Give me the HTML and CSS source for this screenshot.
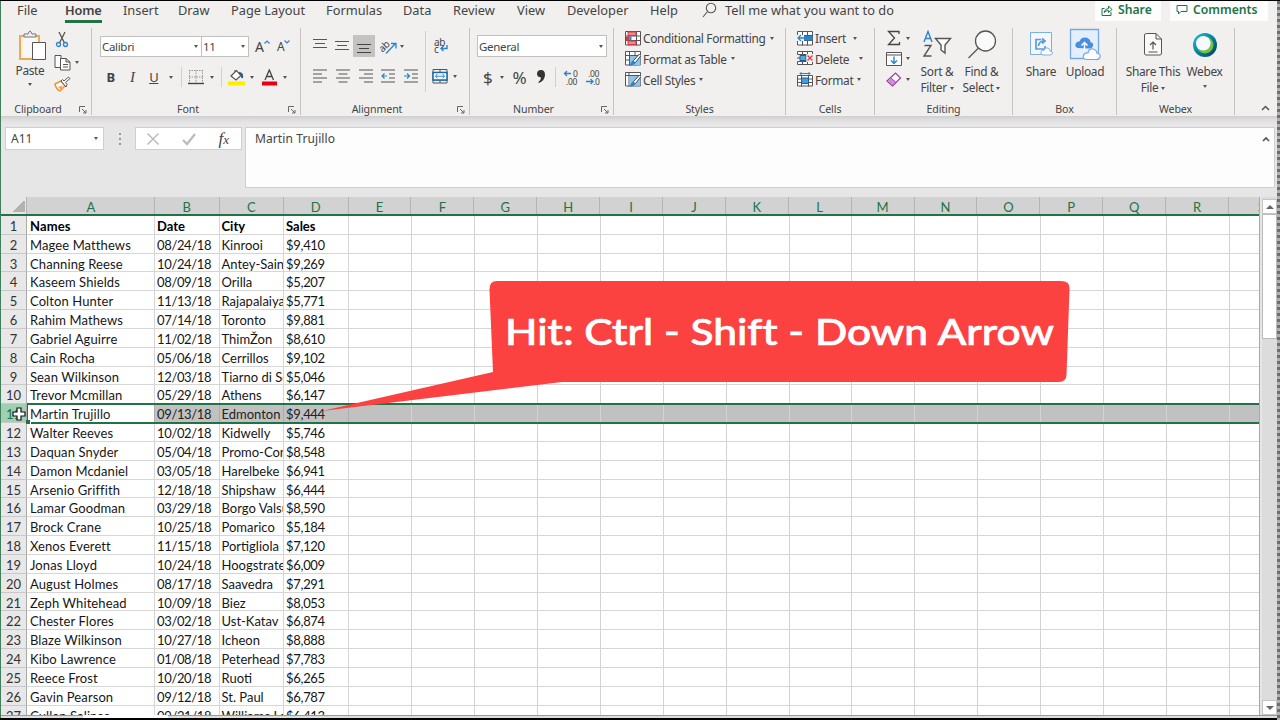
FILE: index.html
```html
<!DOCTYPE html>
<html lang="en">
<head>
<meta charset="utf-8">
<title>Workbook</title>
<link rel="stylesheet" href="styles.css">
</head>
<body>
<div class="app">
<div class="main">
<nav class="tabs">
<span class="t-file">File</span><span class="t-home">Home</span><span class="t-insert">Insert</span><span class="t-draw">Draw</span><span class="t-page">Page Layout</span><span class="t-form">Formulas</span><span class="t-data">Data</span><span class="t-rev">Review</span><span class="t-view">View</span><span class="t-dev">Developer</span><span class="t-help">Help</span>
<svg class="t-search" width="16" height="17" viewBox="0 0 16 17" fill="none" stroke="#555" stroke-width="1.1"><circle cx="9" cy="6" r="4.7"/><path d="M5.5 9.5L1 15"/></svg>
<span class="t-tell">Tell me what you want to do</span>
<span class="btn b-share"><svg width="12" height="13" viewBox="0 0 12 13" fill="none" stroke="#217346"><path d="M3.5 4.5H1v7h9V8M3 8.500Q4 4.500 7.500 4.500V2L11 5.500L7.500 8.500V6.500Q5 6.500 3 8.500Z"/></svg>Share</span>
<span class="btn b-com"><svg width="12" height="12" viewBox="0 0 12 12" fill="none" stroke="#217346"><path d="M1 1.500h10v6H5L2.500 10V7.500H1Z"/></svg>Comments</span>
</nav>
<section class="ribbon">
<div class="group g-clip">
 <div class="body">
  <div class="big paste"><svg width="30" height="32" viewBox="0 0 30 32"><path d="M3 6H22V29H3Z" fill="#fff3df" stroke="#efaa56" stroke-width="2"/><path d="M6 8h13v19H6Z" fill="#f8f8f8"/><path d="M7 7V4h4Q12 1 13 1T15 4h4v3Z" fill="#eee" stroke="#777"/><path d="M15.500 12.500h13v17h-13Z" fill="#fff" stroke="#555"/></svg><span>Paste</span><i class="caret"></i></div>
  <div class="clip-col">
   <div><svg width="16" height="18" viewBox="0 0 16 18" fill="none" stroke="#555" stroke-width="1.300"><path d="M5 1L10.500 12M11 1L5.500 12"/><g stroke="#2b83cc"><circle cx="4.500" cy="13.500" r="2"/><circle cx="11.500" cy="13.500" r="2"/></g></svg></div>
   <div><svg width="17" height="17" viewBox="0 0 17 17" fill="#fff" stroke="#555"><path d="M1 1.500h6v12H1Z"/><path d="M6.500 4.500H12L16 8v8H6.500ZM12 4.500V8h4M9 10.500h5M9 13h5"/></svg><i class="caret"></i></div>
   <div><svg width="17" height="16" viewBox="0 0 17 16"><path d="M1 8L7 5L11 10L6 15Q2 13 1 8Z" fill="#fff" stroke="#e99238" stroke-width="1.400"/><path d="M4 11L9 9.500L7 14Z" fill="#f0a14e"/><path d="M7 5l5 6 1-2.500-1.500-2L16 2.500 14.500 1 10 5 8.500 3.500Z" fill="#fff" stroke="#555"/></svg></div>
  </div>
 </div>
 <div class="cap">Clipboard</div><svg class="launch" width="8" height="8" viewBox="0 0 8 8" fill="none" stroke="#666"><path d="M.5 6V.5H6M3 3l4 4M7 4v3H4"/></svg>
</div>
<div class="group g-font">
 <div class="body col">
  <div class="line font1"><span class="combo c-name">Calibri<i class="caret"></i></span><span class="combo c-size">11<i class="caret"></i></span><span class="grow">A<svg width="6" height="4" viewBox="0 0 6 4" fill="none" stroke="#2b83cc" stroke-width="1.200"><path d="M.5 3.500L3 1L5.500 3.500"/></svg></span><span class="grow small">A<svg width="6" height="4" viewBox="0 0 6 4" fill="none" stroke="#2b83cc" stroke-width="1.200"><path d="M.5 .5L3 3L5.500 .5"/></svg></span></div>
  <div class="line font2"><b>B</b><em>I</em><u>U</u><i class="caret"></i><i class="vr"></i>
   <svg width="16" height="16" viewBox="0 0 16 16" fill="none" stroke="#999"><path d="M1.500 1v13M8 1v13M14.500 1v13M1 1.500h14M1 8h14" stroke-dasharray="1.500 1"/><path d="M0 14.500h16" stroke="#444" stroke-width="1.400"/></svg><i class="caret"></i><i class="vr"></i>
   <svg width="17" height="17" viewBox="0 0 17 17"><path d="M0 12.500h17v4H0Z" fill="#ffed00"/><path d="M3 7L8.500 1.500L13 6.500L8 11ZM7 3V1" fill="#fff" stroke="#555" stroke-width="1.200"/><path d="M11 4Q15 4 14 9" fill="none" stroke="#205891" stroke-width="2"/></svg><i class="caret"></i>
   <svg width="17" height="17" viewBox="0 0 17 17"><path d="M1 12.500h15v4H1Z" fill="#e80010"/><path d="M4 11L8.300 1L12.500 11M5.500 7.500H11" fill="none" stroke="#444" stroke-width="1.300"/></svg><i class="caret"></i></div>
 </div>
 <div class="cap">Font</div><svg class="launch" width="8" height="8" viewBox="0 0 8 8" fill="none" stroke="#666"><path d="M.5 6V.5H6M3 3l4 4M7 4v3H4"/></svg>
</div>
<div class="group g-align">
 <div class="body">
 <div class="al-left">
  <div class="line al1"><span><svg width="14" height="16" viewBox="0 0 14 16" stroke="#555" stroke-width="1.200"><path d="M0 1.500h14M2 5.500h10M0 9.500h14"/></svg></span><span><svg width="14" height="16" viewBox="0 0 14 16" stroke="#555" stroke-width="1.200"><path d="M0 3.500h14M2 7.500h10M0 11.500h14"/></svg></span><span class="on"><svg width="14" height="16" viewBox="0 0 14 16" stroke="#444" stroke-width="1.200"><path d="M0 6.500h14M2 10.500h10M0 14.500h14"/></svg></span><span class="orient"><svg width="18" height="17" viewBox="0 0 18 17"><text x="-1" y="12" class="ab" transform="rotate(-45 4 9)">ab</text><path d="M6 15.500L15 6M11 5.500h5v5" fill="none" stroke="#2b83cc" stroke-width="1.300"/></svg><i class="caret"></i></span></div>
  <div class="line al2"><span><svg width="14" height="14" viewBox="0 0 14 14" stroke="#555" stroke-width="1.200"><path d="M0 1h14M0 5h9M0 9h14M0 13h9"/></svg></span><span><svg width="14" height="14" viewBox="0 0 14 14" stroke="#555" stroke-width="1.200"><path d="M0 1h14M2.500 5h9M0 9h14M2.500 13h9"/></svg></span><span><svg width="14" height="14" viewBox="0 0 14 14" stroke="#555" stroke-width="1.200"><path d="M0 1h14M5 5h9M0 9h14M5 13h9"/></svg></span><span><svg width="14" height="14" viewBox="0 0 14 14" stroke="#555" stroke-width="1.200" fill="none"><path d="M0 1h14M8 5h6M8 9h6M0 13h14"/><path d="M6 7H1M3.500 4.500L1 7l2.500 2.500" stroke="#2b83cc"/></svg></span><span><svg width="14" height="14" viewBox="0 0 14 14" stroke="#555" stroke-width="1.200" fill="none"><path d="M0 1h14M8 5h6M8 9h6M0 13h14"/><path d="M0 7h5M3 4.500L5.500 7L3 9.500" stroke="#2b83cc"/></svg></span></div>
 </div>
 <div class="al-right"><svg width="16" height="18" viewBox="0 0 16 18"><text x="1" y="9" class="wr">ab</text><text x="1" y="16" class="wr">c</text><path d="M14 8v3.500H8M10.500 9L8 11.500L10.500 14" fill="none" stroke="#2b83cc" stroke-width="1.400"/></svg>
 <div class="mrg"><svg width="16" height="15" viewBox="0 0 16 15" fill="none" stroke="#555"><path d="M1 .5h14v13.500H1ZM1 3.500h14M1 11h14M8 .5v3M8 11v3"/><path d="M1 3.500h14v7.500H1Z" fill="#fff" stroke="#1669ad" stroke-width="1.500"/><path d="M3.500 7.200h9M5.500 5L3.500 7.200L5.500 9.400M10.500 5l2 2.200L10.500 9.400" stroke="#2b83cc"/></svg><i class="caret"></i></div></div>
 </div>
 <div class="cap">Alignment</div><svg class="launch" width="8" height="8" viewBox="0 0 8 8" fill="none" stroke="#666"><path d="M.5 6V.5H6M3 3l4 4M7 4v3H4"/></svg>
</div>
<div class="group g-num">
 <div class="body col">
  <div class="line"><span class="combo c-gen">General<i class="caret"></i></span></div>
  <div class="line num2"><span>$</span><i class="caret"></i><span>%</span><svg width="10" height="14" viewBox="0 0 10 14"><path d="M5 0Q9 0 9 5Q9 10 3 13Q2 13 2.500 12Q5 10 5 7.500Q1 7 1 4Q1 0 5 0Z" fill="#333"/></svg><i class="vr"></i>
  <svg width="17" height="17" viewBox="0 0 17 17"><text x="10" y="8" class="dec">0</text><text x="3" y="16" class="dec">.00</text><path d="M8 4.500H1.500M4 2L1.500 4.500L4 7" fill="none" stroke="#2b83cc" stroke-width="1.300"/></svg>
  <svg width="17" height="17" viewBox="0 0 17 17"><text x="3" y="8" class="dec">.00</text><text x="8" y="16" class="dec">.0</text><path d="M1 12.500h7M5.500 10L8 12.500L5.500 15" fill="none" stroke="#2b83cc" stroke-width="1.300"/></svg></div>
 </div>
 <div class="cap">Number</div><svg class="launch" width="8" height="8" viewBox="0 0 8 8" fill="none" stroke="#666"><path d="M.5 6V.5H6M3 3l4 4M7 4v3H4"/></svg>
</div>
<div class="group g-styles">
 <div class="list">
  <div><svg width="16" height="15" viewBox="0 0 16 15"><path d="M.5 .5h15v13.500H.5ZM.5 5h15M.5 9.500h15M4 .5v14M11.500 .5v14" fill="#fff" stroke="#555"/><path d="M3 1h8v3.500H3ZM3 10h8v3.500H3Z" fill="#f6878b" stroke="#d23b43"/><path d="M1 5.500h3v4H1Z" fill="#d23b43"/><path d="M4.500 5.500h2v4h-2Z" fill="#2b83cc"/></svg><span>Conditional Formatting</span><i class="caret"></i></div>
  <div><svg width="16" height="15" viewBox="0 0 16 15"><path d="M.5 .5h15v13.500H.5ZM.5 4.500h15M.5 9h15M4.500 .5v14M10 .5v14" fill="#fff" stroke="#555"/><path d="M5 5h10.500v9H5Z" fill="#8fc4ed"/><path d="M6 14l2.500-4.500L14.500 3 16 4.500 10.500 11.500Z" fill="#fff" stroke="#444"/><path d="M5 14.500Q6 10 8.500 9.500L10.500 11.500Q9 14.500 5 14.500" fill="#2b83cc"/></svg><span>Format as Table</span><i class="caret"></i></div>
  <div><svg width="16" height="15" viewBox="0 0 16 15"><path d="M.5 .5h15v13.500H.5ZM.5 3.500h15M4 .5v14" fill="#fff" stroke="#555"/><path d="M4.500 4h11v9.500h-11Z" fill="#8fc4ed"/><path d="M6 14l2.500-4.500L14.500 3 16 4.500 10.500 11.500Z" fill="#fff" stroke="#444"/><path d="M5 14.500Q6 10 8.500 9.500L10.500 11.500Q9 14.500 5 14.500" fill="#2b83cc"/></svg><span>Cell Styles</span><i class="caret"></i></div>
 </div>
 <div class="cap">Styles</div>
</div>
<div class="group g-cells">
 <div class="list">
  <div><svg width="16" height="15" viewBox="0 0 16 15"><path d="M.5 .5h15v13.500H.5ZM.5 4.500h15M.5 9.500h15M5.500 .5v14M10.500 .5v14" fill="#fff" stroke="#555"/><path d="M7 5h8.500v4.500H7Z" fill="#2b83cc"/><path d="M0 4h7v6H0Z" fill="#f1f0ef"/><path d="M8 7H1M4 4L1 7l3 3" fill="none" stroke="#2b83cc" stroke-width="1.300"/></svg><span class="w38">Insert</span><i class="caret"></i></div>
  <div><svg width="16" height="15" viewBox="0 0 16 15"><path d="M.5 .5h15v3H.5ZM.5 10.500h15v3H.5ZM5.500 .5v3M10.500 .5v3M5.500 10.500v3M10.500 10.500v3" fill="#fff" stroke="#555"/><path d="M3 4.500h6v5H3Z" fill="#59a6df" stroke="#1c5d94"/><path d="M0 7h3" stroke="#1c5d94"/><path d="M9.500 3h7v8h-7Z" fill="#f1f0ef"/><path d="M10.500 4.500l5 5M15.500 4.500l-5 5" stroke="#e03d46" stroke-width="1.400"/></svg><span class="w43">Delete</span><i class="caret"></i></div>
  <div><svg width="16" height="15" viewBox="0 0 16 15"><path d="M.5 3.500h15v10.500H.5ZM.5 7h15M.5 10.500h15M4.500 3.500v11M11.500 3.500v11" fill="#fff" stroke="#555"/><path d="M4.500 6h7v5.500h-7Z" fill="#4b9bda" stroke="#1c5d94"/><path d="M3 1.500h10M4.500 0L3 1.500L4.500 3M11.500 0L13 1.500L11.500 3" fill="none" stroke="#2b83cc"/></svg><span class="w40">Format</span><i class="caret"></i></div>
 </div>
 <div class="cap">Cells</div>
</div>
<div class="group g-edit">
 <div class="body">
 <div class="ed-col">
  <div><svg width="16" height="16" viewBox="0 0 16 16" fill="none" stroke="#444" stroke-width="1.300"><path d="M13 4V1.500H2.500L8.500 8L2.500 14.500H13.500V12"/></svg><i class="caret"></i></div>
  <div><svg width="16" height="14" viewBox="0 0 16 14"><path d="M.5 .5h15v13H.5ZM.5 3h15" fill="#fff" stroke="#555"/><path d="M8 4.500v7M5 8.500l3 3 3-3" fill="none" stroke="#2b83cc" stroke-width="1.400"/></svg><i class="caret"></i></div>
  <div><svg width="16" height="15" viewBox="0 0 16 15"><path d="M1 9L9.500 1L14.500 6L6.500 14Z" fill="#fff" stroke="#a03aa8" stroke-width="1.200"/><path d="M1 9L4.500 5.500L10 10.500L6.500 14Z" fill="#cf8fd4" stroke="#a03aa8"/></svg><i class="caret"></i></div>
 </div>
 <div class="big sort"><svg width="30" height="29" viewBox="0 0 30 29" fill="none" stroke-width="1.400"><path d="M2 12L6 1.500L10 12M3.500 8.500h5" stroke="#2b83cc"/><path d="M2.500 15.500H9L2 26H9.500" stroke="#555"/><path d="M13.500 8.500h15L23 15V23L19 20V15Z" fill="#fff" stroke="#555"/></svg><span>Sort &amp;</span><span>Filter <i class="caret"></i></span></div>
 <div class="big find"><svg width="30" height="29" viewBox="0 0 30 29" fill="none" stroke="#555" stroke-width="1.300"><circle cx="18.500" cy="11" r="10" fill="#fafafa"/><path d="M11.500 18L1.500 28"/></svg><span>Find &amp;</span><span>Select <i class="caret"></i></span></div>
 </div>
 <div class="cap">Editing</div>
</div>
<div class="group g-box">
 <div class="body">
 <div class="big bshare"><svg width="32" height="34" viewBox="0 0 32 34"><path d="M5.500 4.500h21v22h-21Z" fill="#f3f8fe" stroke="#7eaee6"/><path d="M16 11.500h-5V21h9v-3M13.500 18Q14 13 19 13M17 10.500L20 13L17 15.500" fill="none" stroke="#5c99de" stroke-width="1.700"/><path d="M18 27q-3-1-2-3.500 1-1.500 3-1 1-3.500 4-2.500 2.500 1 2 3 3 .5 2.500 2.500Q27 27 25 27Z" fill="#fff" stroke="#7eaee6"/></svg><span>Share</span></div>
 <div class="big bup"><svg width="32" height="34" viewBox="0 0 32 34"><path d="M1.500 1.500h28v29h-28Z" fill="#e3effc" stroke="#74a9e8" stroke-width="1.300"/><path d="M9 20q-3.500-1-2.500-4t4-2.500Q12 9 16.500 9.500t5 4.500q3.500 1 2.500 4T20 20.500Z" fill="#4a8ee0"/><path d="M15.500 23v-8M12.500 17.500l3-3 3 3" fill="none" stroke="#fff" stroke-width="1.500"/><path d="M17 31.500q-3.500-1-2.500-4t4.500-2.500Q20 20 24 21t4 4.500q4 .5 3 3.500t-4 2.500Z" fill="#fff" stroke="#74a9e8" stroke-width="1.200"/></svg><span>Upload</span></div>
 </div>
 <div class="cap">Box</div>
</div>
<div class="group g-wx">
 <div class="body">
 <div class="big stf"><svg width="20" height="34" viewBox="0 0 20 34" fill="#fafafa" stroke="#555"><path d="M3.500 5.500H13L18.500 11v14Q18.500 27 17 27H3Q1.500 27 1.500 25V7Q1.500 5.500 3.500 5.500ZM13 5.500V11h5.500" /><path d="M10 21.500V14M7 17l3-3 3 3M5.500 24h9" fill="none" stroke-width="1.200"/></svg><span>Share This</span><span>File <i class="caret"></i></span></div>
 <div class="big wx"><svg width="26" height="34" viewBox="0 0 26 34"><defs><linearGradient id="w1" x1="0" y1="0" x2="1" y2="1"><stop offset="0" stop-color="#18c2e8"/><stop offset=".5" stop-color="#0a7f9c"/><stop offset="1" stop-color="#053e56"/></linearGradient></defs><circle cx="13" cy="17" r="12" fill="url(#w1)"/><circle cx="13" cy="17" r="8.500" fill="#72c14b"/><circle cx="11.300" cy="15.300" r="7.300" fill="#f7fafa"/></svg><span>Webex</span><i class="caret"></i></div>
 </div>
 <div class="cap">Webex</div>
</div>
<div class="collapse"><svg width="9" height="6" viewBox="0 0 9 6" fill="none" stroke="#555" stroke-width="1.500"><path d="M1 5L4.500 1.500L8 5"/></svg></div>
</section>
<section class="fbar">
 <div class="namebox">A11<i class="caret"></i></div>
 <div class="dots"><i></i><i></i><i></i></div>
 <div class="fx"><svg width="14" height="14" viewBox="0 0 14 14" stroke="#bbb" stroke-width="1.500"><path d="M1.500 1.500l11 11M12.500 1.500l-11 11"/></svg><svg width="14" height="14" viewBox="0 0 14 14" fill="none" stroke="#bbb" stroke-width="2.200"><path d="M1 8l4 4L13 2"/></svg><span>f<small>x</small></span></div>
 <div class="formula"><span>Martin Trujillo</span><svg width="8" height="6" viewBox="0 0 8 6" fill="none" stroke="#555" stroke-width="1.700"><path d="M1 5L4 2L7 5"/></svg></div>
</section>
<section class="sheet">
<div class="gridwrap">
<div class="heads"><span class="corner"></span><span class="ca">A</span><span class="cb">B</span><span class="cb">C</span><span class="cb">D</span><span>E</span><span>F</span><span>G</span><span>H</span><span>I</span><span>J</span><span>K</span><span>L</span><span>M</span><span>N</span><span>O</span><span>P</span><span>Q</span><span>R</span><span class="cs">S</span></div>
<div class="rows">
<div class="row hd"><b>1</b><span>Names</span><span>Date</span><span>City</span><span>Sales</span><i></i></div>
<div class="row"><b>2</b><span>Magee Matthews</span><span>08/24/18</span><span>Kinrooi</span><span>$9,410</span><i></i></div>
<div class="row"><b>3</b><span>Channing Reese</span><span>10/24/18</span><span>Antey-Saint</span><span>$9,269</span><i></i></div>
<div class="row"><b>4</b><span>Kaseem Shields</span><span>08/09/18</span><span>Orilla</span><span>$5,207</span><i></i></div>
<div class="row"><b>5</b><span>Colton Hunter</span><span>11/13/18</span><span>Rajapalaiyam</span><span>$5,771</span><i></i></div>
<div class="row"><b>6</b><span>Rahim Mathews</span><span>07/14/18</span><span>Toronto</span><span>$9,881</span><i></i></div>
<div class="row"><b>7</b><span>Gabriel Aguirre</span><span>11/02/18</span><span>ThimŽon</span><span>$8,610</span><i></i></div>
<div class="row"><b>8</b><span>Cain Rocha</span><span>05/06/18</span><span>Cerrillos</span><span>$9,102</span><i></i></div>
<div class="row"><b>9</b><span>Sean Wilkinson</span><span>12/03/18</span><span>Tiarno di Sotto</span><span>$5,046</span><i></i></div>
<div class="row"><b>10</b><span>Trevor Mcmillan</span><span>05/29/18</span><span>Athens</span><span>$6,147</span><i></i></div>
<div class="row sel"><b>11</b><span>Martin Trujillo</span><span>09/13/18</span><span>Edmonton</span><span>$9,444</span><i></i></div>
<div class="row"><b>12</b><span>Walter Reeves</span><span>10/02/18</span><span>Kidwelly</span><span>$5,746</span><i></i></div>
<div class="row"><b>13</b><span>Daquan Snyder</span><span>05/04/18</span><span>Promo-Control</span><span>$8,548</span><i></i></div>
<div class="row"><b>14</b><span>Damon Mcdaniel</span><span>03/05/18</span><span>Harelbeke</span><span>$6,941</span><i></i></div>
<div class="row"><b>15</b><span>Arsenio Griffith</span><span>12/18/18</span><span>Shipshaw</span><span>$6,444</span><i></i></div>
<div class="row"><b>16</b><span>Lamar Goodman</span><span>03/29/18</span><span>Borgo Valsugana</span><span>$8,590</span><i></i></div>
<div class="row"><b>17</b><span>Brock Crane</span><span>10/25/18</span><span>Pomarico</span><span>$5,184</span><i></i></div>
<div class="row"><b>18</b><span>Xenos Everett</span><span>11/15/18</span><span>Portigliola</span><span>$7,120</span><i></i></div>
<div class="row"><b>19</b><span>Jonas Lloyd</span><span>10/24/18</span><span>Hoogstraten</span><span>$6,009</span><i></i></div>
<div class="row"><b>20</b><span>August Holmes</span><span>08/17/18</span><span>Saavedra</span><span>$7,291</span><i></i></div>
<div class="row"><b>21</b><span>Zeph Whitehead</span><span>10/09/18</span><span>Biez</span><span>$8,053</span><i></i></div>
<div class="row"><b>22</b><span>Chester Flores</span><span>03/02/18</span><span>Ust-Katav</span><span>$6,874</span><i></i></div>
<div class="row"><b>23</b><span>Blaze Wilkinson</span><span>10/27/18</span><span>Icheon</span><span>$8,888</span><i></i></div>
<div class="row"><b>24</b><span>Kibo Lawrence</span><span>01/08/18</span><span>Peterhead</span><span>$7,783</span><i></i></div>
<div class="row"><b>25</b><span>Reece Frost</span><span>10/20/18</span><span>Ruoti</span><span>$6,265</span><i></i></div>
<div class="row"><b>26</b><span>Gavin Pearson</span><span>09/12/18</span><span>St. Paul</span><span>$6,787</span><i></i></div>
<div class="row"><b>27</b><span>Cullen Salinas</span><span>09/21/18</span><span>Williams Lake</span><span>$6,413</span><i></i></div>
</div>
</div>
<div class="scroll"><span class="sb"><i class="up"></i></span><span class="thumb"></span><span class="track"></span><span class="sb"><i class="dn"></i></span></div>
</section>
<footer class="foot"><span></span><span class="ftab"></span><span></span></footer>
</div>
<div class="edge"></div>
<svg class="callout" width="760" height="140" viewBox="0 0 760 140"><path d="M177 5H741Q750 5 749.500 13L746.500 99Q746 106 739 106H242L2 135L173 96L169.500 14Q169 5 177 5Z" fill="#fc4141"/><text x="185" y="69" textLength="549" lengthAdjust="spacingAndGlyphs">Hit: Ctrl - Shift - Down Arrow</text></svg>
<svg class="cursor" width="14" height="14" viewBox="0 0 14 14"><path d="M5 1h4v4h4v4H9v4H5V9H1V5h4Z" fill="#fff" stroke="#111" stroke-width="1.200"/></svg>
</div>
</body>
</html>
```
FILE: styles.css
```css
*,*::before,*::after{box-sizing:border-box}
body{margin:0;width:1280px;height:720px;overflow:hidden;background:#000;font-family:"Noto Sans","Open Sans",sans-serif;color:#444}
svg{display:block;flex:none}
.app{position:relative;display:flex;width:1280px;height:720px;padding-top:1px;overflow:hidden}
.main{width:1277px;flex:none;display:flex;flex-direction:column;background:#e6e6e6;border-left:1px solid #3f7f5c;height:717px}
.edge{width:3px;background:repeating-linear-gradient(#687074 0 3px,#b3b0af 3px 6px)}
.caret{display:inline-block;flex:none;width:0;height:0;border:2.500px solid transparent;border-top:3px solid #555;border-bottom:0;vertical-align:middle}

.tabs{display:flex;height:25px;flex:none;background:#f1f0ef;font-size:12.800px;line-height:18px;white-space:nowrap;align-items:flex-start}
.tabs>span{flex:none;height:22px}
.t-file{width:49px;padding-left:16px}
.t-home{width:37px;margin-left:15px;font-weight:600;border-bottom:3px solid #217346;letter-spacing:-.2px}
.t-insert{width:55px;margin-left:21px}.t-draw{width:53px}.t-page{width:95px}.t-form{width:77px}.t-data{width:50px}.t-rev{width:64px}.t-view{width:50px}.t-dev{width:83px}.t-help{width:51px}
.t-search{margin:1px 7px 0 1px}
.t-tell{width:370px}
.tabs>.btn{display:flex;height:20px;background:#fdfdfd;color:#217346;font-weight:600;font-size:12.200px;align-items:center;gap:5px;padding:0 0 2px 6px}
.b-share{width:66px}.b-com{width:98px;margin-left:9px}

.ribbon{display:flex;height:90px;flex:none;background:#f1f0ef;font-size:11.900px;letter-spacing:-.32px}
.group{position:relative;flex:none;height:87px;margin-top:2px;border-right:1px solid #c6c4c2;display:flex;flex-direction:column}
.body{display:flex;height:73.500px;flex:none}
.body.col{flex-direction:column}
.cap{font-size:10.600px;line-height:15px;text-align:center;padding-right:16px;letter-spacing:-.1px}
.launch{position:absolute;right:4px;bottom:1px}
.line{display:flex;align-items:center}
.big{display:flex;flex-direction:column;align-items:center;line-height:16px;white-space:nowrap}
.vr{display:block;flex:none;width:1px;height:20px;background:#d2d0ce}
.combo{display:flex;align-items:center;justify-content:space-between;background:#fff;border:1px solid #c3c1bf;height:21px;padding:0 3px 0 1px;font-size:11.500px}
.g-clip{width:91px}.g-font{width:209px}.g-align{width:169px}.g-num{width:144px}.g-styles{width:172px}.g-cells{width:89px}.g-edit{width:138px}.g-box{width:104px}.g-wx{width:118px}
.paste{width:30px;margin-left:14px;padding-top:2px}
.paste svg{margin-left:4px}
.paste .caret{margin-top:5px}
.clip-col{margin-left:9px}
.clip-col>div{height:22px;display:flex;align-items:center;gap:4px}
.clip-col{padding-top:1px}
.font1{margin:8px 0 0 8px;height:21px}
.c-name{width:102px}.c-size{width:48px;margin-left:-1px}
.grow{display:flex;font-size:14px;line-height:16px;margin-left:6px;width:16px}
.grow svg{margin-top:1px;margin-left:0}
.grow.small{font-size:12px;margin-left:6px}
.font2{margin:10px 0 0 8px;height:20px;font-size:13px}
.font2 b,.font2 em,.font2 u{width:21.500px;text-align:center}
.font2 em{font-family:"Liberation Serif",serif;font-size:15px}
.font2 .caret{margin:0 7px 0 6px}
.font2 .vr{margin-right:6px}
.font2 u+.caret{margin:0 8px 0 4px}
.font2 svg~svg+.caret{margin:0 7px 0 5px}
.al-left{width:125px;height:61px;margin-top:3px;border-right:1px solid #d2d0ce}
.al1{margin:4px 0 0 8px}
.al1 span{width:22px;height:22px;display:flex;align-items:center;justify-content:center}
.al1 .on{background:#c5c3c2}
.al1 .orient{width:30px;gap:2px;margin-left:2px}
.al2{margin:12px 0 0 8px}
.al2 span{width:22.700px;display:flex;justify-content:center}
.ab{font:10px "Noto Sans",sans-serif;fill:#444}
.wr{font:10px "Noto Sans",sans-serif;fill:#444}
.al-right{padding:9px 0 0 7px}
.mrg{display:flex;align-items:center;gap:5px;margin-top:14px;margin-left:-1px}
.c-gen{width:130px;margin:7px 0 0 7px;height:22px}
.num2{font-size:17px;height:22px;margin:9px 0 0 13px}
.num2 .caret{margin:0 8px 0 8px}
.num2 span+svg{margin:0 9px 0 10px}
.num2 .vr{margin-right:7px}
.num2 .vr~svg+svg{margin-left:5px}
.dec{font:8.500px "Noto Sans",sans-serif;fill:#444}
.list{height:73.500px;flex:none;padding:0 0 0 11px}
.list div{display:flex;align-items:center;height:21px;white-space:nowrap}
.list div:first-child{height:20px}
.list span{margin:0 4px 0 2px}
.list .w38{width:34px}.list .w43{width:40px}.list .w40{width:38px}
.ed-col{margin-left:11px;width:29px}
.ed-col div{height:21.300px;display:flex;align-items:center;gap:4px}
.ed-col div:first-child{height:20px}
.sort{width:44px;padding-top:2px}.find{width:45px;padding-top:2px}
.sort svg,.find svg{margin-bottom:4px}
.bshare{margin-left:9px;width:38px}.bup{width:50px}
.bshare svg,.bup svg,.stf svg,.wx svg{margin-bottom:1px}
.stf{width:60px;margin-left:6px}.wx{width:43px}
.wx .caret{margin-top:6px}
.g-styles .cap,.g-cells .cap,.g-edit .cap,.g-box .cap,.g-wx .cap{padding-right:0}
.collapse{margin:79px 0 0 26px}

.fbar{display:flex;height:81px;flex:none;padding:11px 0 0 4px;background:linear-gradient(#cecece,#dfdfdf 4px,#e6e6e6 8px);font-size:12px}
.namebox{width:99px;height:23px;background:#fff;border:1px solid #cfcfcf;display:flex;align-items:center;justify-content:space-between;padding:0 5px}
.dots{width:31px;height:23px;display:flex;flex-direction:column;align-items:center;justify-content:center;gap:3px}
.dots i{width:2px;height:2px;background:#999}
.fx{width:107px;height:23px;background:#fff;border:1px solid #cfcfcf;display:flex;align-items:center;justify-content:space-between;padding:0 12px 0 10px}
.fx span{font:italic 17px "Liberation Serif",serif}.fx small{font-size:13px}
.formula{width:1030px;height:61px;margin-left:3px;background:#fdfdfd;border:1px solid #cfcfcf;display:flex;justify-content:space-between;padding:2px 4px 0 9px;line-height:18px;letter-spacing:.1px}
.formula svg{margin-top:6px}

.sheet{display:flex;flex:none;height:518px;font-variant-ligatures:none}
.gridwrap{width:1259px;flex:none;border-right:1px solid #a8a8a8;overflow:hidden;display:flex;flex-direction:column}
.heads{display:flex;height:19px;flex:none;border-bottom:2px solid #217346;font:13px/20px Lato,sans-serif;color:#217346}
.heads span{flex:none;height:17px;width:62.900px;text-align:center;background:#d2d2d2;border-right:1px solid #b4b4b4}
.heads .corner{width:26px;background:linear-gradient(135deg,transparent 50%,#b2b2b2 50%) 11px 4px/13px 11px no-repeat #e6e6e6}
.heads .ca{width:128px;padding-left:1px}.heads .cb{width:64.500px}
.heads .cs{width:32px;border:0;overflow:hidden;padding-left:29px;text-align:left}
.rows{flex:1;overflow:hidden;background:#fff;font:13px/20.500px Lato,sans-serif;color:#161616}
.row{display:grid;grid-template-columns:26px 128px 64.500px 64.500px 64.500px 1fr;height:18.830px;border-bottom:1px solid #d6d6d6;white-space:nowrap}
.row>*{overflow:hidden;height:18.830px}
.row b{font-weight:400;background:#e8e8e8;text-align:center;border-right:1px solid #aaa;border-bottom:1px solid #c9c9c9;color:#333}
.row span{padding-left:2px;border-right:1px solid #d6d6d6}
.row b+span{padding-left:3px;letter-spacing:.1px}
.row:not(.hd) span:nth-of-type(2){letter-spacing:-.35px}
.row:not(.hd) span:nth-of-type(4){letter-spacing:-.3px}
.row i{background:repeating-linear-gradient(to right,transparent 0 61.930px,#d3d3d3 61.930px 62.930px)}
.row.hd span{font-weight:700;color:#000}
.sel{position:relative;background:#c1c1c1;color:#222;border:0}
.sel::before{content:"";position:absolute;left:26px;right:0;top:-1px;height:21px;border:solid #217346;border-width:2px 0 2px 1px}
.sel::after{content:"";position:absolute;left:25px;top:16px;width:5px;height:4px;background:#217346;border:solid #fff;border-width:0 1px 0 0}
.sel b{background:#9fd0b1;color:#217346}
.sel b+span{background:#fff}
.row.sel span{border-color:#adadad}
.scroll{width:15px;margin-left:2px;padding-top:2px;display:flex;flex-direction:column;background:#dcdcdc}
.sb{height:15px;background:#fff;border:1px solid #c4c4c4;display:flex;align-items:center;justify-content:center}
.up{border:4px solid transparent;border-top:0;border-bottom-color:#666}
.dn{border:4px solid transparent;border-bottom:0;border-top-color:#666}
.thumb{height:125px;background:#fff;border:1px solid #bbb}
.track{flex:1}
.foot{display:flex;flex:1;background:#fff}
.foot span{width:82px;background:#ddd;border-top:1px solid #999}
.foot .ftab{width:85px;background:#fff;border:0}
.foot span:last-child{flex:1}
.callout{position:absolute;left:320px;top:276px}
.callout text{font:500 37.500px Lato,sans-serif;font-variant-ligatures:none;fill:#fff;stroke:#fff;stroke-width:.7}
.cursor{position:absolute;left:12px;top:407px}
```
